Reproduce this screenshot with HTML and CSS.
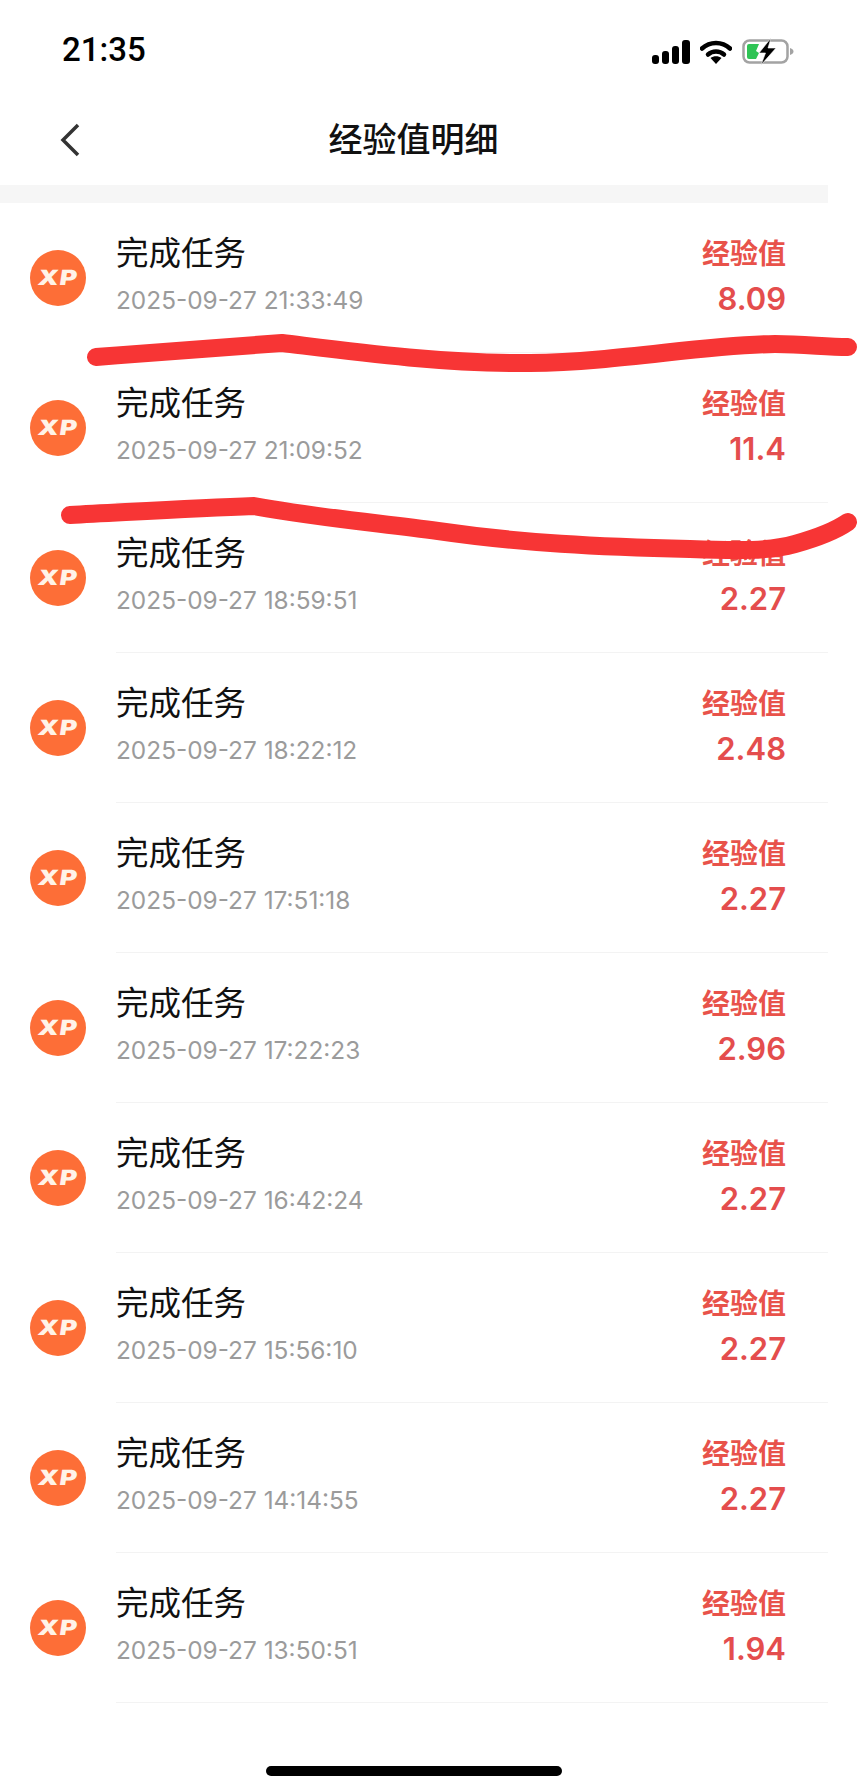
FILE: index.html
```html
<!DOCTYPE html>
<html lang="zh-CN">
<head>
    <meta charset="UTF-8">
    <meta name="viewport" content="width=device-width, initial-scale=1.0">
    <title>经验值明细</title>
    <link rel="stylesheet" href="styles.css">
</head>
<body>
    <div class="pagina">
        <div class="status-bar">
            <span class="hora">21:35</span>
            <div class="status-icones">
                <svg width="38" height="24" viewBox="0 0 38 24">
                    <rect x="0" y="15" width="7" height="9" rx="3" fill="#000"/>
                    <rect x="10" y="11" width="7" height="13" rx="3" fill="#000"/>
                    <rect x="20" y="6" width="7" height="18" rx="3" fill="#000"/>
                    <rect x="30" y="0" width="8" height="24" rx="3" fill="#000"/>
                </svg>
                <svg width="32" height="24" viewBox="0 0 32 24">
                    <path d="M2 8.5C10 1 22 1 30 8.500" fill="none" stroke="#000" stroke-width="4.500" stroke-linecap="round"/>
                    <path d="M8 14.500C12.500 10.500 19.500 10.500 24 14.500" fill="none" stroke="#000" stroke-width="4.500" stroke-linecap="round"/>
                    <path d="M10.500 18L16 24L21.500 18C18.500 15.800 13.500 15.800 10.500 18Z" fill="#000"/>
                </svg>
                <svg width="53" height="27" viewBox="0 0 53 27">
                    <rect x="1.500" y="2.500" width="44" height="22" rx="6" fill="#fff" stroke="#a3a3a3" stroke-width="2.500"/>
                    <path d="M5 8a2 2 0 0 1 2-2h7v15H7a2 2 0 0 1-2-2Z" fill="#2fc455"/>
                    <path d="M14 6h3l-3 7 3 2-3 6Z" fill="#2fc455"/>
                    <path d="M29 0L17 15H23.500L19 27L34 10H26Z" fill="#000" stroke="#fff" stroke-width="0.600"/>
                    <path d="M48 10C50.500 11 51.500 12 51.500 13.500C51.500 15 50.500 16 48 17Z" fill="#a3a3a3"/>
                </svg>
            </div>
        </div>

        <div class="nav-bar">
            <svg class="voltar" width="20" height="34" viewBox="0 0 20 34">
                <path d="M18 2L3 17L18 32" fill="none" stroke="#333" stroke-width="3.500"/>
            </svg>
            <h2 class="titulo">经验值明细</h2>
        </div>

        <div class="faixa"></div>

        <div class="lista">
            <div class="item">
                <div class="xp"><span>XP</span></div>
                <div class="item-corpo">
                    <div class="info">
                        <div class="nome">完成任务</div>
                        <div class="data">2025-09-27 21:33:49</div>
                    </div>
                    <div class="valor">
                        <div class="rotulo">经验值</div>
                        <div class="numero">8.09</div>
                    </div>
                </div>
            </div>
            <div class="item">
                <div class="xp"><span>XP</span></div>
                <div class="item-corpo">
                    <div class="info">
                        <div class="nome">完成任务</div>
                        <div class="data">2025-09-27 21:09:52</div>
                    </div>
                    <div class="valor">
                        <div class="rotulo">经验值</div>
                        <div class="numero">11.4</div>
                    </div>
                </div>
            </div>
            <div class="item">
                <div class="xp"><span>XP</span></div>
                <div class="item-corpo">
                    <div class="info">
                        <div class="nome">完成任务</div>
                        <div class="data">2025-09-27 18:59:51</div>
                    </div>
                    <div class="valor">
                        <div class="rotulo">经验值</div>
                        <div class="numero">2.27</div>
                    </div>
                </div>
            </div>
            <div class="item">
                <div class="xp"><span>XP</span></div>
                <div class="item-corpo">
                    <div class="info">
                        <div class="nome">完成任务</div>
                        <div class="data">2025-09-27 18:22:12</div>
                    </div>
                    <div class="valor">
                        <div class="rotulo">经验值</div>
                        <div class="numero">2.48</div>
                    </div>
                </div>
            </div>
            <div class="item">
                <div class="xp"><span>XP</span></div>
                <div class="item-corpo">
                    <div class="info">
                        <div class="nome">完成任务</div>
                        <div class="data">2025-09-27 17:51:18</div>
                    </div>
                    <div class="valor">
                        <div class="rotulo">经验值</div>
                        <div class="numero">2.27</div>
                    </div>
                </div>
            </div>
            <div class="item">
                <div class="xp"><span>XP</span></div>
                <div class="item-corpo">
                    <div class="info">
                        <div class="nome">完成任务</div>
                        <div class="data">2025-09-27 17:22:23</div>
                    </div>
                    <div class="valor">
                        <div class="rotulo">经验值</div>
                        <div class="numero">2.96</div>
                    </div>
                </div>
            </div>
            <div class="item">
                <div class="xp"><span>XP</span></div>
                <div class="item-corpo">
                    <div class="info">
                        <div class="nome">完成任务</div>
                        <div class="data">2025-09-27 16:42:24</div>
                    </div>
                    <div class="valor">
                        <div class="rotulo">经验值</div>
                        <div class="numero">2.27</div>
                    </div>
                </div>
            </div>
            <div class="item">
                <div class="xp"><span>XP</span></div>
                <div class="item-corpo">
                    <div class="info">
                        <div class="nome">完成任务</div>
                        <div class="data">2025-09-27 15:56:10</div>
                    </div>
                    <div class="valor">
                        <div class="rotulo">经验值</div>
                        <div class="numero">2.27</div>
                    </div>
                </div>
            </div>
            <div class="item">
                <div class="xp"><span>XP</span></div>
                <div class="item-corpo">
                    <div class="info">
                        <div class="nome">完成任务</div>
                        <div class="data">2025-09-27 14:14:55</div>
                    </div>
                    <div class="valor">
                        <div class="rotulo">经验值</div>
                        <div class="numero">2.27</div>
                    </div>
                </div>
            </div>
            <div class="item">
                <div class="xp"><span>XP</span></div>
                <div class="item-corpo">
                    <div class="info">
                        <div class="nome">完成任务</div>
                        <div class="data">2025-09-27 13:50:51</div>
                    </div>
                    <div class="valor">
                        <div class="rotulo">经验值</div>
                        <div class="numero">1.94</div>
                    </div>
                </div>
            </div>
        </div>

        <div class="home-bar"></div>
    </div>

    <!-- riscos vermelhos feitos a mão por cima da lista -->
    <svg class="riscos" width="858" height="1792" viewBox="0 0 858 1792">
        <path d="M96 357C160 352 225 347 282 343C340 350 440 364 530 363C620 362 700 345 775 344C805 344 825 347 848 347" />
        <path d="M70 515C130 512 195 508 254 506C320 518 380 523 438 531C520 543 600 547 690 549C740 551 770 551 795 544C820 537 835 531 848 522" />
    </svg>
</body>
</html>
```

FILE: styles.css
```css
* {
    box-sizing: border-box;
}
body {
    margin: 0;
    background-color: #fff;
    font-family: "Liberation Sans", "Noto Sans CJK SC", sans-serif;
    color: #000;
}
.pagina {
    position: relative;
    width: 858px;
    height: 1792px;
    overflow: hidden;
}
.status-bar {
    height: 100px;
    padding: 38px 63px 0 62px;
    display: flex;
    justify-content: space-between;
    align-items: flex-start;
}
.hora {
    font-family: Roboto, "Liberation Sans", sans-serif;
    font-size: 33px;
    font-weight: 500;
    line-height: 24px;
}
.status-icones {
    display: flex;
    align-items: center;
    gap: 10px;
}
.nav-bar {
    width: 828px;
    height: 85px;
    padding: 0 0 6px 60px;
    display: flex;
    align-items: center;
    position: relative;
}
.titulo {
    flex: 1;
    margin: 0;
    padding-right: 81px;
    text-align: center;
    font-size: 34px;
    font-weight: 500;
    line-height: 40px;
    color: #111;
}
.faixa {
    width: 828px;
    height: 18px;
    background-color: #f6f6f6;
}
.lista {
    width: 828px;
}
.item {
    height: 150px;
    padding-left: 30px;
    display: flex;
    align-items: center;
    gap: 30px;
}
.xp {
    width: 56px;
    height: 56px;
    flex: none;
    border-radius: 50%;
    background-color: #fd6e37;
    display: flex;
    align-items: center;
    justify-content: center;
}
.xp span {
    font-family: Inter, "Liberation Sans", sans-serif;
    font-size: 21px;
    font-weight: 900;
    color: #fff3e8;
    letter-spacing: 1px;
    line-height: 24px;
    transform: scaleX(1.25) skewX(-7deg);
}
.item-corpo {
    flex: 1;
    height: 100%;
    padding-right: 42px;
    border-bottom: 1px solid #f3f3f3;
    display: flex;
    justify-content: space-between;
    align-items: center;
}
.info {
    margin-top: -2px;
}
.nome {
    font-size: 32.500px;
    line-height: 40px;
    color: #111;
}
.data {
    font-family: Inter, "Liberation Sans", sans-serif;
    margin-top: 6px;
    font-size: 24.400px;
    line-height: 40px;
    color: #9b9b9b;
}
.valor {
    text-align: right;
    margin-top: -2px;
}
.rotulo {
    font-size: 28px;
    font-weight: 600;
    line-height: 40px;
    color: #e8524a;
}
.numero {
    font-family: Inter, "Liberation Sans", sans-serif;
    margin-top: 4px;
    font-size: 31px;
    font-weight: 600;
    line-height: 40px;
    color: #e44d4d;
}
.home-bar {
    width: 296px;
    height: 10px;
    margin: 63px 0 0 266px;
    border-radius: 5px;
    background-color: #000;
}
.riscos {
    position: absolute;
    top: 0;
    left: 0;
    pointer-events: none;
}
.riscos path {
    fill: none;
    stroke: #f73535;
    stroke-width: 18px;
    stroke-linecap: round;
    stroke-linejoin: round;
}
```
